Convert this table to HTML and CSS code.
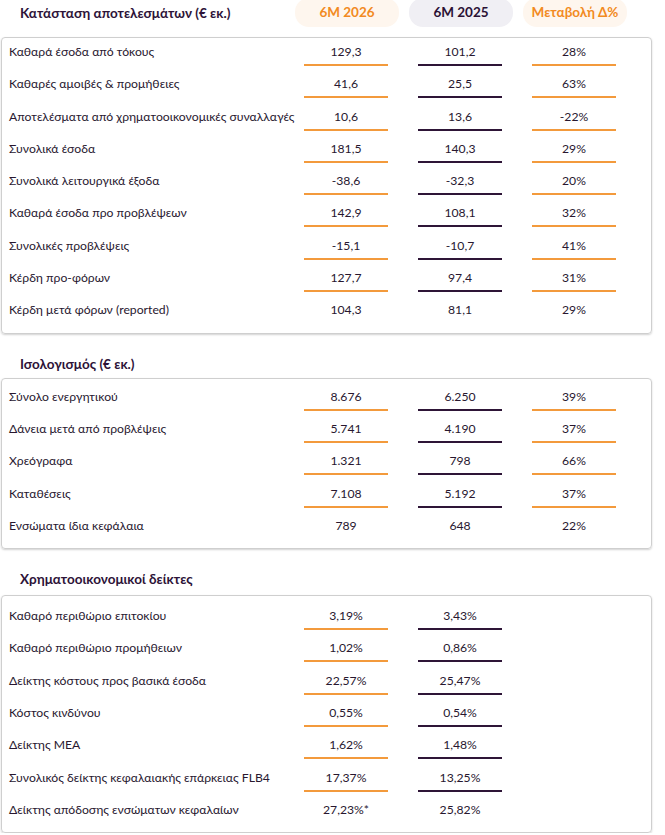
FILE: index.html
```html
<!DOCTYPE html>
<html lang="el">
<head>
<meta charset="utf-8">
<title>Κατάσταση αποτελεσμάτων</title>
<link rel="stylesheet" href="styles.css">
</head>
<body>
<div class="page">
  <div class="head">
    <div class="title">Κατάσταση αποτελεσμάτων (€ εκ.)</div>
    <div class="pill pill-cur">6M 2026</div>
    <div class="pill pill-prev">6M 2025</div>
    <div class="pill pill-chg">Μεταβολή Δ%</div>
  </div>

  <div class="box box-1">
    <div class="row"><div class="label">Καθαρά έσοδα από τόκους</div><div class="val cur">129,3</div><div class="val prev">101,2</div><div class="val chg">28%</div></div>
    <div class="row"><div class="label">Καθαρές αμοιβές &amp; προμήθειες</div><div class="val cur">41,6</div><div class="val prev">25,5</div><div class="val chg">63%</div></div>
    <div class="row"><div class="label">Αποτελέσματα από χρηματοοικονομικές συναλλαγές</div><div class="val cur">10,6</div><div class="val prev">13,6</div><div class="val chg">-22%</div></div>
    <div class="row"><div class="label">Συνολικά έσοδα</div><div class="val cur">181,5</div><div class="val prev">140,3</div><div class="val chg">29%</div></div>
    <div class="row"><div class="label">Συνολικά λειτουργικά έξοδα</div><div class="val cur">-38,6</div><div class="val prev">-32,3</div><div class="val chg">20%</div></div>
    <div class="row"><div class="label">Καθαρά έσοδα προ προβλέψεων</div><div class="val cur">142,9</div><div class="val prev">108,1</div><div class="val chg">32%</div></div>
    <div class="row"><div class="label">Συνολικές προβλέψεις</div><div class="val cur">-15,1</div><div class="val prev">-10,7</div><div class="val chg">41%</div></div>
    <div class="row"><div class="label">Κέρδη προ-φόρων</div><div class="val cur">127,7</div><div class="val prev">97,4</div><div class="val chg">31%</div></div>
    <div class="row last"><div class="label">Κέρδη μετά φόρων (reported)</div><div class="val cur">104,3</div><div class="val prev">81,1</div><div class="val chg">29%</div></div>
  </div>

  <div class="section">Ισολογισμός (€ εκ.)</div>
  <div class="box box-2">
    <div class="row"><div class="label">Σύνολο ενεργητικού</div><div class="val cur">8.676</div><div class="val prev">6.250</div><div class="val chg">39%</div></div>
    <div class="row"><div class="label">Δάνεια μετά από προβλέψεις</div><div class="val cur">5.741</div><div class="val prev">4.190</div><div class="val chg">37%</div></div>
    <div class="row"><div class="label">Χρεόγραφα</div><div class="val cur">1.321</div><div class="val prev">798</div><div class="val chg">66%</div></div>
    <div class="row"><div class="label">Καταθέσεις</div><div class="val cur">7.108</div><div class="val prev">5.192</div><div class="val chg">37%</div></div>
    <div class="row last"><div class="label">Ενσώματα ίδια κεφάλαια</div><div class="val cur">789</div><div class="val prev">648</div><div class="val chg">22%</div></div>
  </div>

  <div class="section section-3">Χρηματοοικονομικοί δείκτες</div>
  <div class="box box-3">
    <div class="row"><div class="label">Καθαρό περιθώριο επιτοκίου</div><div class="val cur">3,19%</div><div class="val prev">3,43%</div></div>
    <div class="row"><div class="label">Καθαρό περιθώριο προμήθειων</div><div class="val cur">1,02%</div><div class="val prev">0,86%</div></div>
    <div class="row"><div class="label">Δείκτης κόστους προς βασικά έσοδα</div><div class="val cur">22,57%</div><div class="val prev">25,47%</div></div>
    <div class="row"><div class="label">Κόστος κινδύνου</div><div class="val cur">0,55%</div><div class="val prev">0,54%</div></div>
    <div class="row"><div class="label">Δείκτης ΜΕΑ</div><div class="val cur">1,62%</div><div class="val prev">1,48%</div></div>
    <div class="row"><div class="label">Συνολικός δείκτης κεφαλαιακής επάρκειας FLB4</div><div class="val cur">17,37%</div><div class="val prev">13,25%</div></div>
    <div class="row last"><div class="label">Δείκτης απόδοσης ενσώματων κεφαλαίων</div><div class="val cur">27,23%*</div><div class="val prev">25,82%</div></div>
  </div>
</div>
</body>
</html>
```

FILE: styles.css
```css
html, body {
  margin: 0;
  padding: 0;
  background: #ffffff;
}

body {
  font-family: Lato, "Open Sans", "Noto Sans", sans-serif;
  font-size: 12.2px;
  color: #28172f;
}

.page {
  width: 665px;
}

.head {
  display: grid;
  grid-template-columns: 288px 114px 114px 114px;
  margin-left: 2px;
  height: 37px;
}

.title {
  font-weight: 700;
  font-size: 13.5px;
  color: #2d1338;
  padding-left: 18px;
  line-height: 26px;
}

.pill {
  margin: -2px 5px 0;
  height: 29px;
  border-radius: 14px;
  text-align: center;
  line-height: 29px;
  font-weight: 700;
  font-size: 13.5px;
}

.pill-cur {
  background: #fef6ee;
  color: #f28a22;
}

.pill-prev {
  background: #f0eff4;
  color: #2a1134;
}

.pill-chg {
  background: #fef6ee;
  color: #f28a22;
}

.box {
  margin-left: 1px;
  width: 649px;
  border: 1px solid #cfcfcf;
  border-radius: 4px;
  box-shadow: 0 1px 2px rgba(0, 0, 0, 0.18);
  padding: 0 0 4px;
}

.box-2 {
  padding-top: 4px;
}

.box-3 {
  padding-top: 6px;
}

.row {
  display: grid;
  grid-template-columns: 287px 114px 114px 114px;
  height: 32.3px;
}

.label {
  padding-left: 7px;
  line-height: 28px;
  white-space: nowrap;
}

.val {
  margin: 0 15px;
  height: 26px;
  line-height: 28px;
  text-align: center;
  border-bottom: 2px solid #f39a3c;
}

.val.prev {
  border-bottom-color: #2e1537;
}

.row.last .val {
  border-bottom: none;
}

.section {
  font-weight: 700;
  font-size: 13.5px;
  color: #2d1338;
  padding-left: 20px;
  height: 44px;
  line-height: 61px;
}

.section-3 {
  height: 46px;
}
```
